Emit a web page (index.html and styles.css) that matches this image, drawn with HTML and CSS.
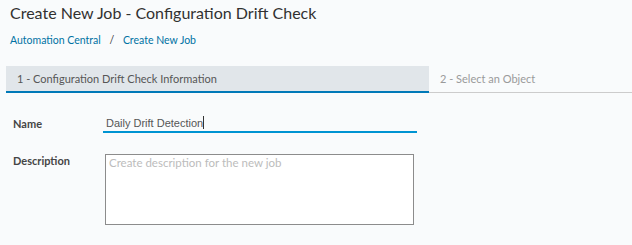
FILE: index.html
```html
<!DOCTYPE html>
<html>
<head>
  <title>Create New Job</title>
  <link rel="stylesheet" href="styles.css">
</head>
<body>
  <h1 class="titulo">Create New Job - Configuration Drift Check</h1>
  <div class="migas">
    <a href="#">Automation Central</a>
    <span class="sep">/</span>
    <a href="#">Create New Job</a>
  </div>

  <div class="pasos">
    <div class="paso activo">1 - Configuration Drift Check Information</div>
    <div class="paso">2 - Select an Object</div>
  </div>

  <div class="formulario">
    <div class="fila">
      <label class="etiqueta" for="nombre">Name</label>
      <div class="campo-nombre">
        <span class="valor">Daily Drift Detection</span><span class="cursor"></span>
      </div>
    </div>
    <div class="fila">
      <label class="etiqueta alta" for="descripcion">Description</label>
      <textarea id="descripcion" class="descripcion" placeholder="Create description for the new job"></textarea>
    </div>
  </div>
</body>
</html>
```

FILE: styles.css
```css
body {
  margin: 0;
  padding: 0;
  font-family: Lato, "Open Sans", sans-serif;
  background-color: #f9fbfc;
  color: #333333;
}

.titulo {
  margin: 0;
  padding: 3px 0 0 10px;
  height: 20px;
  font-size: 16px;
  font-weight: normal;
  line-height: 20px;
  color: #313131;
}

.migas {
  padding: 10px 0 0 10px;
  font-size: 10.5px;
  line-height: 14px;
  height: 18px;
}

.migas a {
  color: #0072a3;
  text-decoration: none;
}

.migas .sep {
  color: #333333;
  padding: 0 6px;
}

.pasos {
  display: flex;
  margin: 15px 0 0 6px;
  border-bottom: 1px solid #cccccc;
}

.paso {
  font-size: 11px;
  line-height: 25px;
  height: 25px;
  padding-left: 11px;
  color: #9a9a9a;
  flex: 1;
}

.paso.activo {
  flex: none;
  width: 412px;
  background-color: #e1e6ea;
  color: #565656;
  border-bottom: 2px solid #0079b8;
  margin-bottom: -1px;
}

.formulario {
  padding: 22px 0 0 13px;
}

.fila {
  display: flex;
  align-items: flex-start;
  margin-bottom: 21px;
}

.etiqueta {
  width: 90px;
  font-size: 11px;
  font-weight: bold;
  color: #454545;
  line-height: 14px;
  padding-top: 2px;
}

.etiqueta.alta {
  padding-top: 0;
}

.campo-nombre {
  width: 314px;
  height: 18px;
  border-bottom: 2px solid #0094d2;
  font-family: "Liberation Sans Narrow", "Liberation Sans", sans-serif;
  font-size: 11px;
  line-height: 16px;
  padding-left: 3px;
  box-sizing: border-box;
  color: #565656;
}

.cursor {
  display: inline-block;
  width: 1px;
  height: 13px;
  background-color: #333333;
  vertical-align: -2px;
}

.descripcion {
  margin: 0 0 0 2px;
  width: 309px;
  height: 71px;
  box-sizing: border-box;
  border: 1px solid #8c8c8c;
  padding: 1px 3px;
  font-family: Lato, "Open Sans", sans-serif;
  font-size: 11.5px;
  resize: none;
  background-color: #ffffff;
}

.descripcion::placeholder {
  color: #bcbcbc;
}
```
